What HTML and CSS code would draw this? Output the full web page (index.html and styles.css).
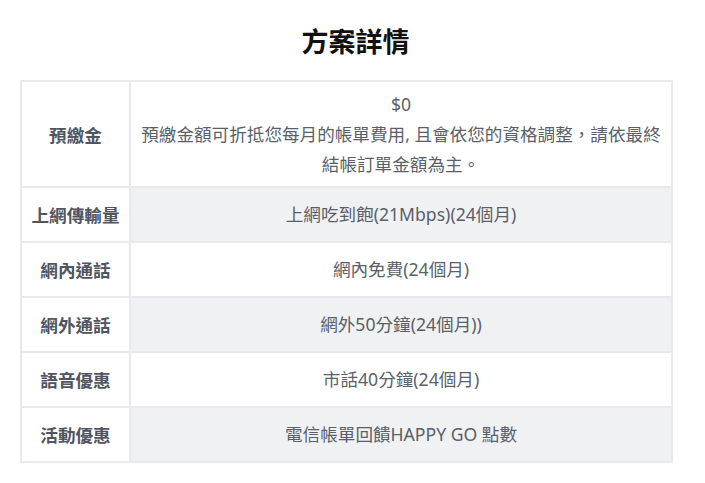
FILE: index.html
```html
<!DOCTYPE html>
<html lang="zh-Hant">
<head>
<meta charset="utf-8">
<title>方案詳情</title>
<link rel="stylesheet" href="styles.css">
</head>
<body>
<main class="page">
  <h2 class="title">方案詳情</h2>
  <table class="plan">
    <tbody>
      <tr class="row-tall">
        <th>預繳金</th>
        <td><div>$0</div><div>預繳金額可折抵您每月的帳單費用, 且會依您的資格調整，請依最終結帳訂單金額為主。</div></td>
      </tr>
      <tr class="row-alt">
        <th>上網傳輸量</th>
        <td>上網吃到飽(21Mbps)(24個月)</td>
      </tr>
      <tr>
        <th>網內通話</th>
        <td>網內免費(24個月)</td>
      </tr>
      <tr class="row-alt">
        <th>網外通話</th>
        <td>網外50分鐘(24個月))</td>
      </tr>
      <tr>
        <th>語音優惠</th>
        <td>市話40分鐘(24個月)</td>
      </tr>
      <tr class="row-alt">
        <th>活動優惠</th>
        <td>電信帳單回饋HAPPY GO 點數</td>
      </tr>
    </tbody>
  </table>
</main>
</body>
</html>
```
FILE: styles.css
```css
html, body {
  margin: 0;
  padding: 0;
  background: #ffffff;
}

body {
  font-family: "Noto Sans", "Noto Sans CJK TC", sans-serif;
}

.page {
  padding: 23px 32px 20px 20px;
}

.title {
  margin: 0 0 22px 0;
  text-align: center;
  font-family: "Noto Sans CJK TC", sans-serif;
  font-size: 27px;
  line-height: 35px;
  font-weight: 700;
  color: #111111;
  padding-left: 18px;
}

.plan {
  width: 653px;
  border-collapse: collapse;
  border: 2px solid #e8e9ec;
}

.plan th,
.plan td {
  border: 2px solid #e8e9ec;
  font-size: 17.6px;
  line-height: 29px;
  padding: 12px 8px;
  text-align: center;
  vertical-align: middle;
}

.plan th {
  width: 91px;
  font-weight: 700;
  color: #4f5561;
  background: #ffffff;
  font-family: "Noto Sans CJK TC", sans-serif;
}

.plan td {
  color: #5a5f69;
  font-weight: 400;
  background: #ffffff;
}

.plan .row-alt td {
  background: #f0f1f3;
}

.plan .row-tall td {
  line-height: 30px;
  padding: 7px 6px;
}
```
